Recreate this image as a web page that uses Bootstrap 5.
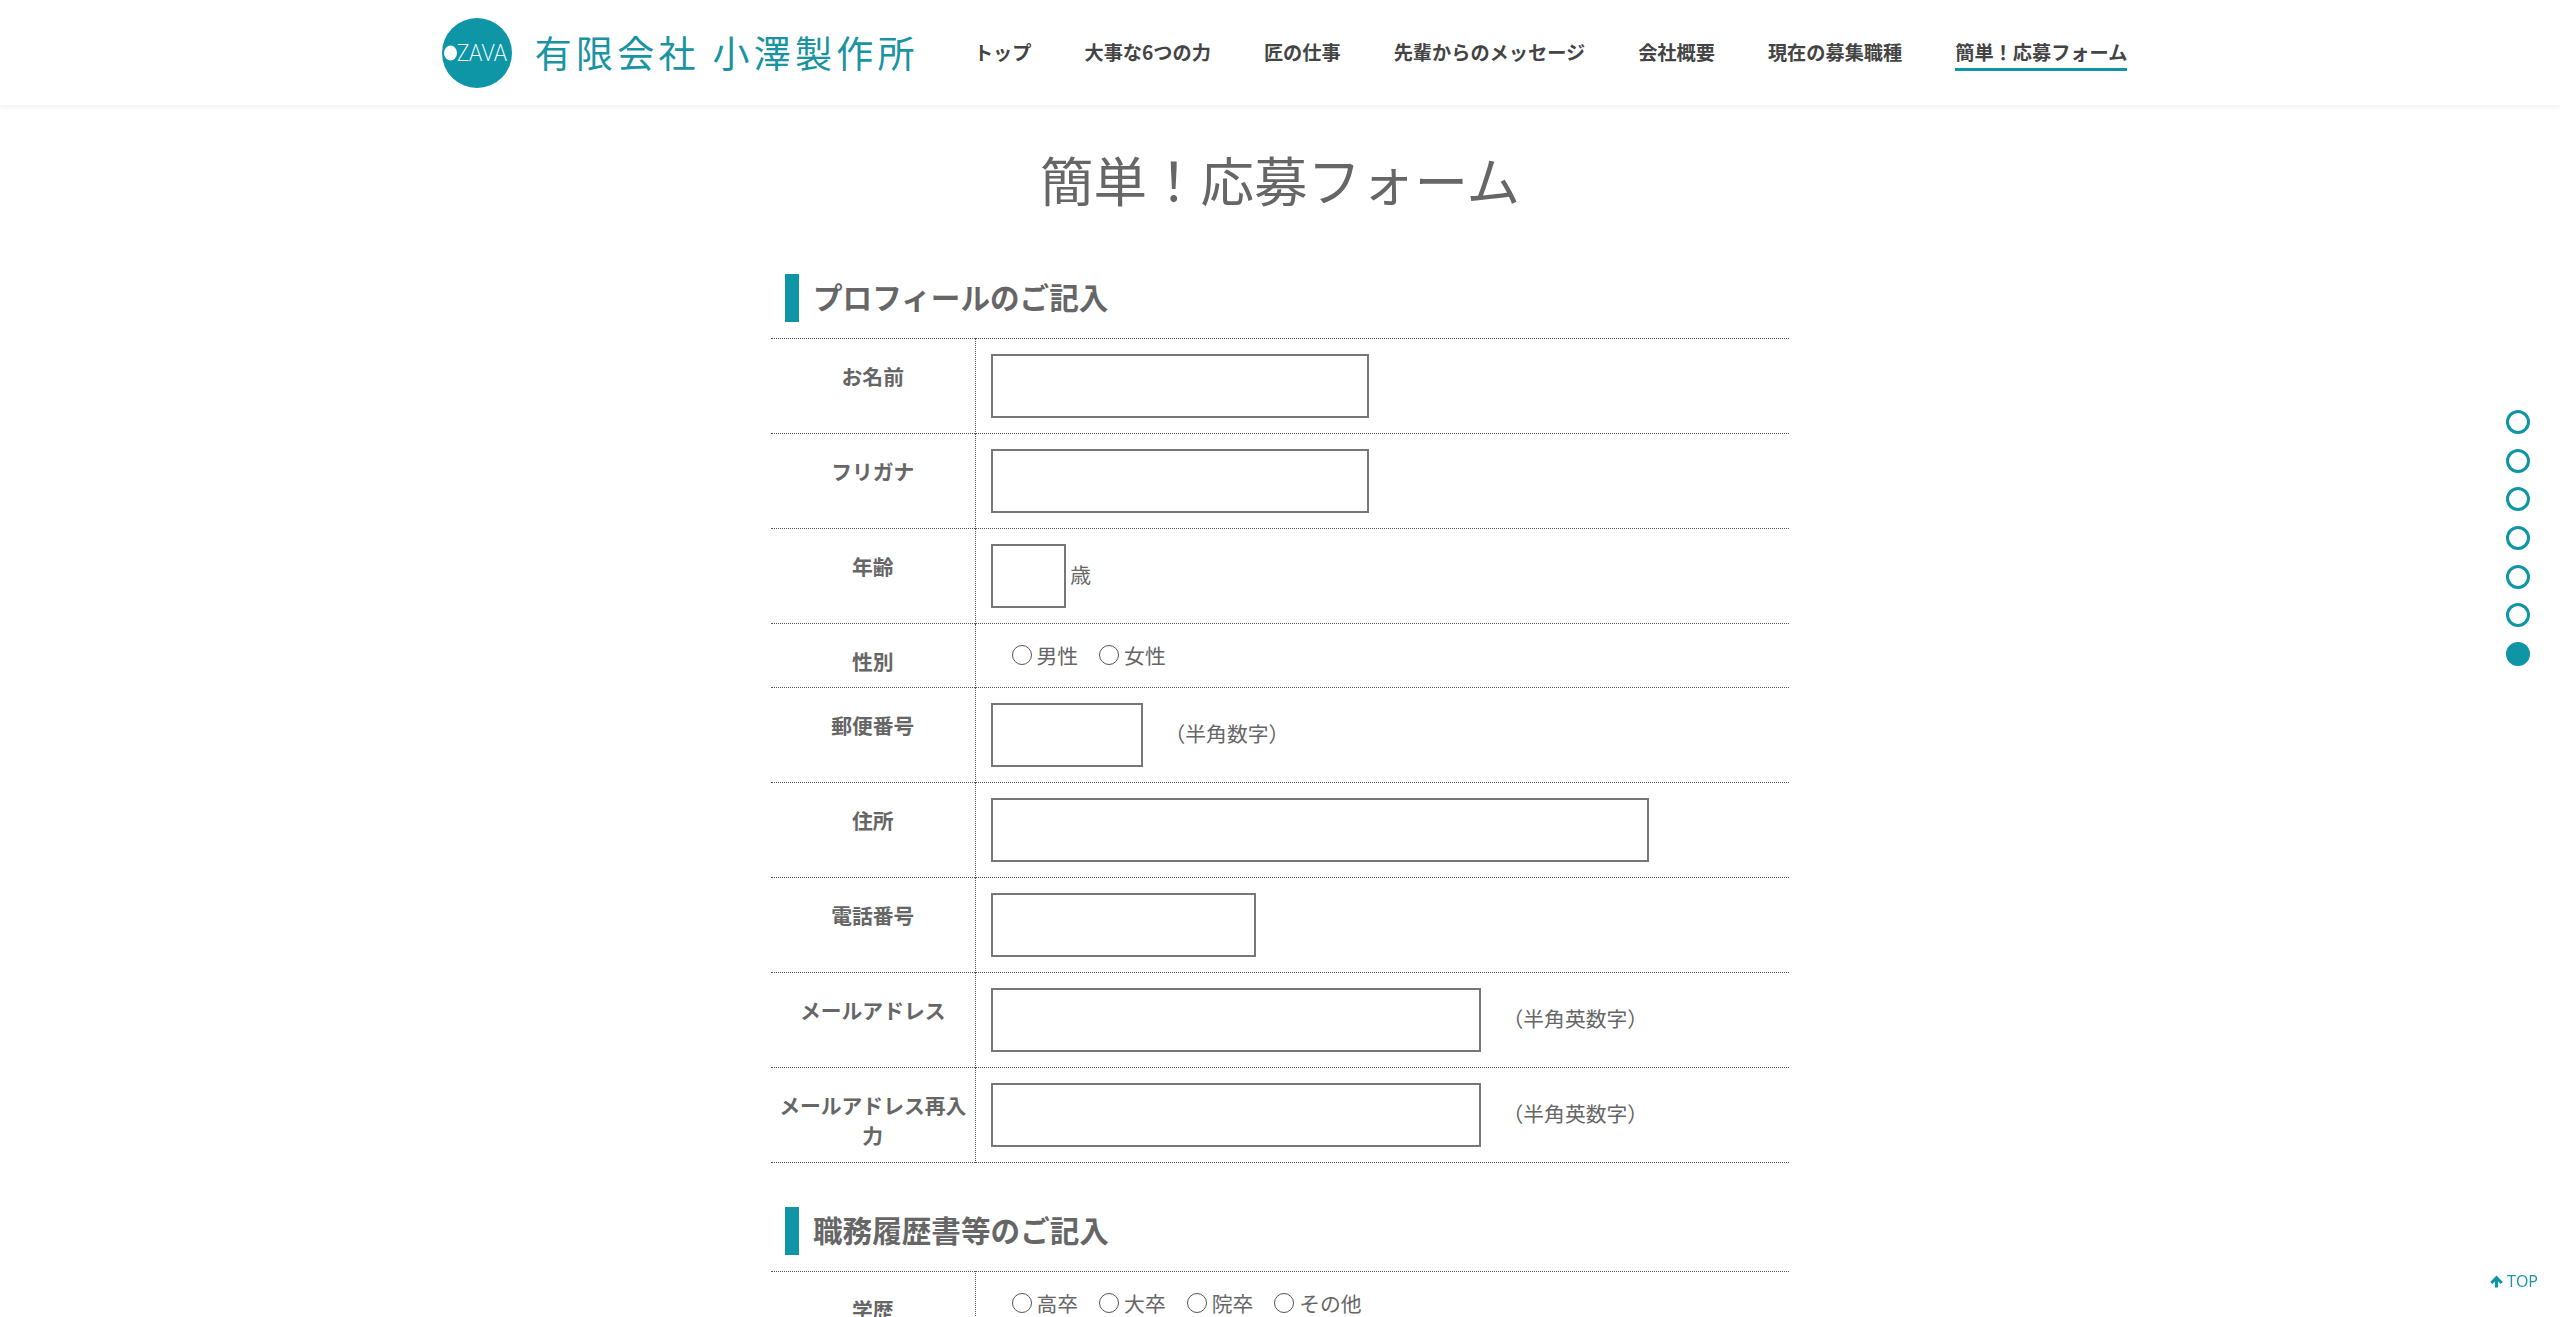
<!DOCTYPE html>
<html lang="ja">
<head>
    <meta charset="UTF-8">
    <meta name="viewport" content="width=device-width, initial-scale=1.0">
    <title>簡単！応募フォーム</title>
    <link href="https://cdn.jsdelivr.net/npm/bootstrap@5.3.0/dist/css/bootstrap.min.css" rel="stylesheet">
    <style>
        html, body { height: 100%; overflow: hidden; }
        body { font-family: "Noto Sans CJK JP", "Noto Sans", sans-serif; color: #666; background: #fff; }

        .site-head { height: 105px; box-shadow: 0 2px 5px rgba(0,0,0,.06); padding: 0 0 0 9px; position: relative; z-index: 2; }
        .site-logo { gap: 23px; margin-right: 55px; padding: 0; }
        .site-logo svg { overflow: visible; }
        .logo-name { font-size: 37px; font-weight: 400; letter-spacing: 4.3px; color: #1a93a3; line-height: 1; white-space: nowrap; }
        .head-links { gap: 53px; }
        .site-head .head-links .nav-link { font-size: 19.2px; font-weight: 700; color: #444; padding: 0 0 2px; line-height: 28px; border-bottom: 3px solid transparent; white-space: nowrap; margin-top: 3px; }
        .site-head .head-links .nav-link.active { color: #444; border-bottom-color: #0e95a6; }

        .page-title { font-size: 53.5px; font-weight: 400; line-height: 84px; margin: 32px 0 53px; text-align: center; color: #666; }
        .form-wrap { width: 1018px; margin: 0 auto; }
        .block-title { font-size: 29.6px; font-weight: 700; line-height: 46px; height: 48px; margin: 0 0 16px 14px; padding-left: 14px; border-left: 14px solid #0e95a6; color: #666; }

        .apply-table { width: 100%; border-collapse: collapse; table-layout: fixed; margin-bottom: 44px; }
        .apply-table tr { border-top: 1px dotted #555; border-bottom: 1px dotted #555; }
        .apply-table th { width: 204px; font-size: 20.8px; font-weight: 700; line-height: 30px; padding: 22px 5px 11px; text-align: center; vertical-align: top; border-right: 1px dotted #555; }
        .apply-table td { font-size: 20.8px; line-height: 30px; padding: 15px 14px 15px 15px; vertical-align: middle; }
        .apply-table td.pick-cell { padding: 16px 14px 16px 36px; vertical-align: top; }

        .box-field { height: 64px; border: 2px solid #777; background: #fff; vertical-align: middle; outline: none; border-radius: 0; }
        .w-name { width: 378px; }
        .w-age { width: 75px; }
        .w-zip { width: 152px; }
        .w-addr { width: 658px; }
        .w-tel { width: 265px; }
        .w-mail { width: 490px; }
        .unit-tag { position: relative; top: 1px; }
        .unit-note { margin-left: 22px; position: relative; top: 1px; }

        .pick-row { gap: 21px; }
        .pick-item { gap: 5px; }
        .pick-dot { appearance: none; width: 20px; height: 20px; border: 1.5px solid #555; border-radius: 50%; background: #fff; margin: 0; }

        .page-dots { position: fixed; right: 30px; top: 410px; gap: 14.7px; z-index: 3; }
        .page-dot { display: block; width: 24px; height: 24px; border: 3px solid #0e95a6; border-radius: 50%; }
        .page-dot.on { background: #0e95a6; }
        .to-top { position: fixed; right: 22px; bottom: 25px; gap: 4px; color: #1a93a3; font-family: "Open Sans", sans-serif; font-size: 16px; line-height: 22px; text-decoration: none; z-index: 3; }
    </style>
</head>
<body>
    <header class="site-head navbar navbar-expand justify-content-center">
        <a class="navbar-brand site-logo d-flex align-items-center" href="#">
            <svg width="70" height="70" viewBox="0 0 70 70" aria-hidden="true">
                <circle cx="35" cy="35" r="35" fill="#0e95a6"/>
                <ellipse cx="8.5" cy="35" rx="6.5" ry="7.5" fill="#fff"/>
                <text x="15" y="43" font-family="Lato" font-weight="300" font-size="23.5" textLength="50" lengthAdjust="spacingAndGlyphs" fill="#fff">ZAVA</text>
            </svg>
            <span class="logo-name">有限会社 小澤製作所</span>
        </a>
        <ul class="navbar-nav head-links">
            <li class="nav-item"><a class="nav-link" href="#">トップ</a></li>
            <li class="nav-item"><a class="nav-link" href="#">大事な6つの力</a></li>
            <li class="nav-item"><a class="nav-link" href="#">匠の仕事</a></li>
            <li class="nav-item"><a class="nav-link" href="#">先輩からのメッセージ</a></li>
            <li class="nav-item"><a class="nav-link" href="#">会社概要</a></li>
            <li class="nav-item"><a class="nav-link" href="#">現在の募集職種</a></li>
            <li class="nav-item"><a class="nav-link active" href="#">簡単！応募フォーム</a></li>
        </ul>
    </header>

    <main>
        <h1 class="page-title">簡単！応募フォーム</h1>
        <form class="form-wrap">
            <h2 class="block-title">プロフィールのご記入</h2>
            <table class="apply-table">
                <tr><th>お名前</th><td><input class="box-field w-name" type="text"></td></tr>
                <tr><th>フリガナ</th><td><input class="box-field w-name" type="text"></td></tr>
                <tr><th>年齢</th><td><input class="box-field w-age" type="text"> <span class="unit-tag">歳</span></td></tr>
                <tr>
                    <th>性別</th>
                    <td class="pick-cell">
                        <div class="pick-row d-flex">
                            <label class="pick-item d-flex align-items-center"><input class="pick-dot" type="radio" name="sex">男性</label>
                            <label class="pick-item d-flex align-items-center"><input class="pick-dot" type="radio" name="sex">女性</label>
                        </div>
                    </td>
                </tr>
                <tr><th>郵便番号</th><td><input class="box-field w-zip" type="text"><span class="unit-note">（半角数字）</span></td></tr>
                <tr><th>住所</th><td><input class="box-field w-addr" type="text"></td></tr>
                <tr><th>電話番号</th><td><input class="box-field w-tel" type="text"></td></tr>
                <tr><th>メールアドレス</th><td><input class="box-field w-mail" type="text"><span class="unit-note">（半角英数字）</span></td></tr>
                <tr><th>メールアドレス再入力</th><td><input class="box-field w-mail" type="text"><span class="unit-note">（半角英数字）</span></td></tr>
            </table>

            <h2 class="block-title">職務履歴書等のご記入</h2>
            <table class="apply-table">
                <tr>
                    <th>学歴</th>
                    <td class="pick-cell">
                        <div class="pick-row d-flex">
                            <label class="pick-item d-flex align-items-center"><input class="pick-dot" type="radio" name="edu">高卒</label>
                            <label class="pick-item d-flex align-items-center"><input class="pick-dot" type="radio" name="edu">大卒</label>
                            <label class="pick-item d-flex align-items-center"><input class="pick-dot" type="radio" name="edu">院卒</label>
                            <label class="pick-item d-flex align-items-center"><input class="pick-dot" type="radio" name="edu">その他</label>
                        </div>
                    </td>
                </tr>
            </table>
        </form>
    </main>

    <div class="page-dots d-flex flex-column">
        <a class="page-dot" href="#"></a>
        <a class="page-dot" href="#"></a>
        <a class="page-dot" href="#"></a>
        <a class="page-dot" href="#"></a>
        <a class="page-dot" href="#"></a>
        <a class="page-dot" href="#"></a>
        <a class="page-dot on" href="#"></a>
    </div>

    <a class="to-top d-flex align-items-center" href="#">
        <svg width="13" height="13" viewBox="0 0 13 13" aria-hidden="true"><path d="M6.5 .6 12.8 6.9 10.6 9 8.1 6.5V12.6H4.9V6.5L2.4 9 .2 6.9Z" fill="#0e95a6"/></svg>
        TOP
    </a>
</body>
</html>
